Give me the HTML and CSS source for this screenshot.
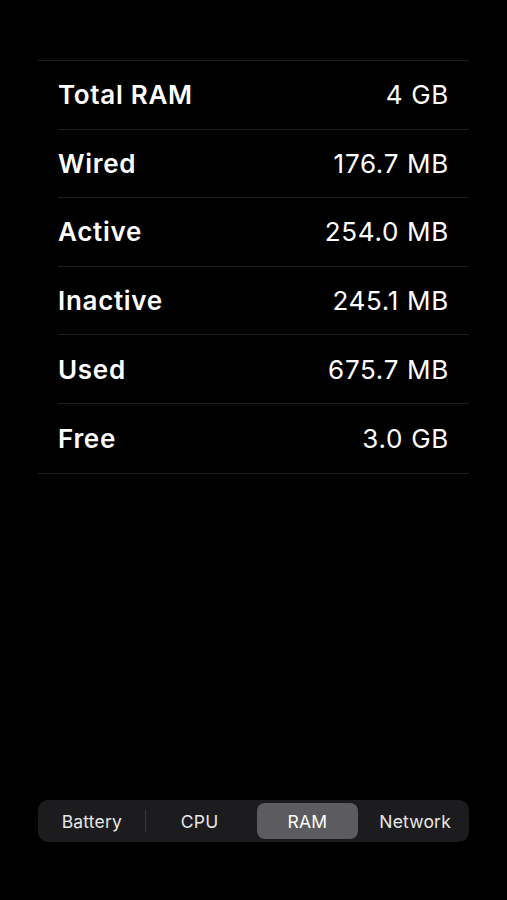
FILE: index.html
```html
<!DOCTYPE html>
<html>
<head>
<meta charset="utf-8">
<link rel="stylesheet" href="styles.css">
</head>
<body>
<div class="screen">
  <div class="list">
    <div class="row"><span class="label">Total RAM</span><span class="value">4 GB</span></div>
    <div class="row"><span class="label">Wired</span><span class="value">176.7 MB</span></div>
    <div class="row"><span class="label">Active</span><span class="value">254.0 MB</span></div>
    <div class="row"><span class="label">Inactive</span><span class="value">245.1 MB</span></div>
    <div class="row"><span class="label">Used</span><span class="value">675.7 MB</span></div>
    <div class="row last"><span class="label">Free</span><span class="value">3.0 GB</span></div>
  </div>
  <div class="segmented">
    <div class="seg with-divider"><span class="pill">Battery</span></div>
    <div class="seg"><span class="pill">CPU</span></div>
    <div class="seg"><span class="pill selected">RAM</span></div>
    <div class="seg"><span class="pill">Network</span></div>
  </div>
</div>
</body>
</html>
```
FILE: styles.css
```css
html, body {
  margin: 0;
  padding: 0;
  background: #000;
  height: 100%;
}
.screen {
  height: 900px;
  display: flex;
  flex-direction: column;
  padding: 60px 38px 0;
  box-sizing: border-box;
  font-family: Inter, "Noto Sans", sans-serif;
  color: #fff;
}
.list {
  border-top: 1px solid #1f1f1f;
  border-bottom: 1px solid #1f1f1f;
}
.row {
  height: 68.6px;
  margin-left: 20px;
  padding-right: 20px;
  display: flex;
  align-items: center;
  justify-content: space-between;
  border-bottom: 1px solid #1f1f1f;
  box-sizing: border-box;
}
.row.last {
  border-bottom: none;
}
.label {
  font-size: 26px;
  font-weight: 600;
  letter-spacing: 0.7px;
}
.value {
  font-size: 26px;
  font-weight: 400;
  letter-spacing: 0.7px;
}
.segmented {
  margin-top: auto;
  margin-bottom: 58px;
  height: 42px;
  background: #1c1c1e;
  border-radius: 10px;
  display: flex;
  box-sizing: border-box;
}
.seg {
  flex: 1;
  position: relative;
  padding: 3px 3.5px;
  display: flex;
}
.seg.with-divider::after {
  content: "";
  position: absolute;
  right: 0;
  top: 10px;
  width: 1px;
  height: 22px;
  background: #3a3a3c;
}
.pill {
  flex: 1;
  display: flex;
  align-items: center;
  justify-content: center;
  font-size: 17.5px;
  letter-spacing: 0.2px;
  color: #e8e8e8;
  border-radius: 8px;
}
.pill.selected {
  background: #5c5c60;
  color: #fff;
}
```
